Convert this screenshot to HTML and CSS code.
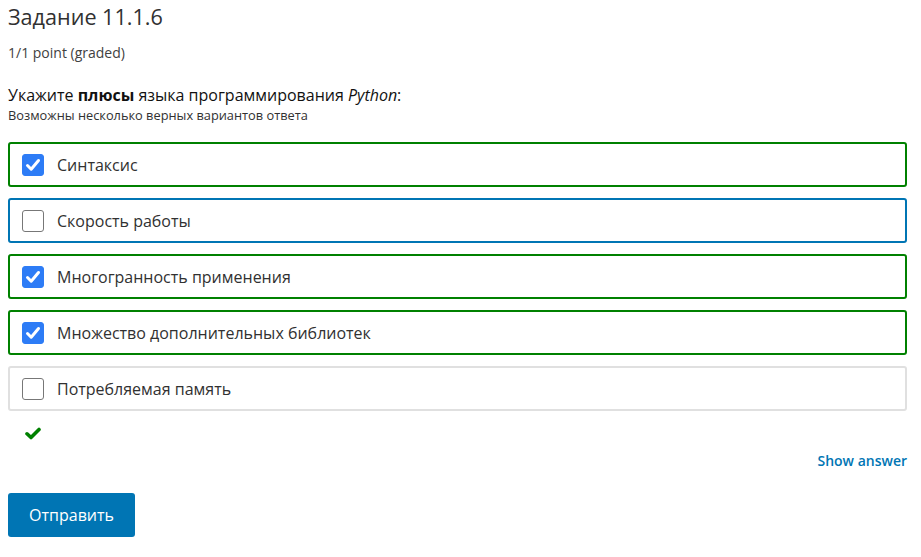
FILE: index.html
```html
<!DOCTYPE html>
<html lang="ru">
<head>
<meta charset="utf-8">
<link rel="stylesheet" href="styles.css">
</head>
<body>
<div class="problem">
  <h3 class="title">Задание 11.1.6</h3>
  <div class="points">1/1 point (graded)</div>
  <p class="question">Укажите <strong>плюсы</strong> языка программирования <em>Python</em>:</p>
  <p class="hint">Возможны несколько верных вариантов ответа</p>
  <div class="choices">
    <label class="choice correct"><span class="box checked"><svg viewBox="0 0 22 22" width="22" height="22"><path d="M5.5 11.5 L9.2 15.2 L16.5 6.5" fill="none" stroke="#fff" stroke-width="3" stroke-linecap="round" stroke-linejoin="round"/></svg></span><span class="label">Синтаксис</span></label>
    <label class="choice focus"><span class="box"></span><span class="label">Скорость работы</span></label>
    <label class="choice correct"><span class="box checked"><svg viewBox="0 0 22 22" width="22" height="22"><path d="M5.5 11.5 L9.2 15.2 L16.5 6.5" fill="none" stroke="#fff" stroke-width="3" stroke-linecap="round" stroke-linejoin="round"/></svg></span><span class="label">Многогранность применения</span></label>
    <label class="choice correct"><span class="box checked"><svg viewBox="0 0 22 22" width="22" height="22"><path d="M5.5 11.5 L9.2 15.2 L16.5 6.5" fill="none" stroke="#fff" stroke-width="3" stroke-linecap="round" stroke-linejoin="round"/></svg></span><span class="label">Множество дополнительных библиотек</span></label>
    <label class="choice"><span class="box"></span><span class="label">Потребляемая память</span></label>
  </div>
  <div class="status"><svg viewBox="0 0 16 13" width="16" height="13"><path d="M2 6.8 L6 10.5 L14 2.5" fill="none" stroke="#008100" stroke-width="3.6" stroke-linecap="round" stroke-linejoin="round"/></svg></div>
  <div class="actions-top"><a class="show-answer" href="#">Show answer</a></div>
  <button class="submit">Отправить</button>
</div>
</body>
</html>
```
FILE: styles.css
```css
* { box-sizing: border-box; }
body {
  margin: 0;
  background: #fff;
  font-family: "Open Sans", "Noto Sans", sans-serif;
  color: #313131;
}
.problem {
  padding: 0 14px 0 8px;
}
.title {
  margin: 0;
  padding-top: 2px;
  font-size: 21.6px;
  font-weight: 400;
  line-height: 30px;
  color: #313131;
}
.points {
  margin-top: 11px;
  font-size: 14px;
  line-height: 20px;
  color: #414141;
}
.question {
  margin: 22px 0 0;
  font-size: 16px;
  line-height: 20px;
  color: #111;
}
.question strong { font-weight: 700; }
.hint {
  margin: 2px 0 0;
  font-size: 12.8px;
  line-height: 16px;
  color: #313131;
}
.choices {
  margin-top: 19px;
  display: flex;
  flex-direction: column;
  gap: 11px;
}
.choice {
  display: flex;
  align-items: center;
  height: 45px;
  border: 2px solid #e0e0e0;
  border-radius: 3px;
  padding-left: 12px;
}
.choice.correct { border-color: #008100; }
.choice.focus { border-color: #0075b4; }
.box {
  width: 22px;
  height: 22px;
  border: 1px solid #777;
  border-radius: 3px;
  background: #fff;
  display: flex;
}
.box.checked {
  background: #2d7cf6;
  border-color: #2d7cf6;
}
.box svg { margin: -1px; }
.label {
  margin-left: 13px;
  font-size: 16px;
  color: #313131;
}
.status {
  height: 30px;
  padding: 16px 0 0 17px;
}
.status svg { display: block; }
.actions-top {
  display: flex;
  justify-content: flex-end;
  margin-top: 10px;
}
.show-answer {
  font-size: 14px;
  font-weight: 600;
  color: #0075b4;
  text-decoration: none;
  line-height: 20px;
}
.submit {
  margin-top: 22px;
  width: 127px;
  height: 44px;
  background: #0075b4;
  color: #fff;
  border: none;
  border-radius: 3px;
  font-family: "Open Sans", "Noto Sans", sans-serif;
  font-size: 16px;
  padding: 0;
}
```
